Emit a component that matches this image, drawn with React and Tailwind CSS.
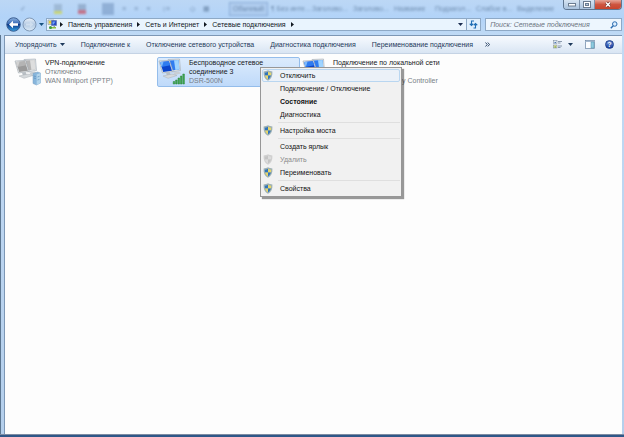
import { useState } from "react";

const crumbs = ["Панель управления", "Сеть и Интернет", "Сетевые подключения"];

const commands = [
  "Подключение к",
  "Отключение сетевого устройства",
  "Диагностика подключения",
  "Переименование подключения",
];

const ghostStyles = ["¶ Без инте...", "Заголово...", "Заголово...", "Название", "Подзагол...", "Слабое в...", "Выделение"];

const menu = [
  [
    { label: "Отключить", shield: true },
    { label: "Подключение / Отключение" },
    { label: "Состояние", bold: true },
    { label: "Диагностика" },
  ],
  [{ label: "Настройка моста", shield: true }],
  [
    { label: "Создать ярлык" },
    { label: "Удалить", shield: true, disabled: true },
    { label: "Переименовать", shield: true },
  ],
  [{ label: "Свойства", shield: true }],
];

function Caret({ className }) {
  return (
    <svg className={className} width="5" height="3" viewBox="0 0 5 3" aria-hidden="true">
      <path d="M0 0h5L2.5 3z" fill="currentColor" />
    </svg>
  );
}

function Arrow() {
  return (
    <svg width="3" height="5" viewBox="0 0 3 5" aria-hidden="true">
      <path d="M0 0v5L3 2.5z" fill="#111820" />
    </svg>
  );
}

function Shield({ gray }) {
  const blue = gray ? "#c4c4c4" : "#2f74bd";
  const yellow = gray ? "#dcdcdc" : "#e6d66a";
  return (
    <svg width="10" height="11" viewBox="0 0 18 20" aria-hidden="true">
      <path d="M9 .5C6.500 2 4 2.500 1 2.500c-.5 8.500 2 14 8 17 6-3 8.500-8.500 8-17C14 2.500 11.500 2 9 .5z" fill={gray ? "#d0d0d0" : "#9db0b4"} />
      <path d="M9 3C7 4.200 5 4.800 3.200 5c0 2 .2 3.500.6 5H9z" fill={blue} />
      <path d="M9 3c2 1.200 4 1.800 5.800 2 0 2-.2 3.500-.6 5H9z" fill={yellow} />
      <path d="M3.800 10H9v7c-2.500-1.500-4.500-4-5.200-7z" fill={yellow} />
      <path d="M14.200 10H9v7c2.500-1.500 4.500-4 5.200-7z" fill={blue} />
    </svg>
  );
}

function Computers({ on, badge }) {
  const dark = on ? "#0b45cc" : "#9a9a9a";
  const mid = on ? "#2f7cf0" : "#b4b4b4";
  const light = on ? "#9fd4ff" : "#dedede";
  return (
    <svg className="shrink-0" width="28" height="28" viewBox="0 0 28 28" aria-hidden="true">
      {/* rear monitor */}
      <path d="M10 1.500 21.500 1l1 11.500-9 1.500z" fill="#dfe3e7" stroke="#a3abb3" strokeWidth=".6" />
      <path d="M11 2.500 20.600 2l.8 9.500-8 1z" fill={mid} />
      <path d="M16 2.200 20.600 2l.8 9.500-4 .5z" fill={light} />
      <path d="M15 14.500l6-1 2 2-6 1.500z" fill="#c9ced3" />
      {/* front monitor */}
      <path d="M1 3l10.500-.6 3.600 11L4.500 15z" fill="#eceff1" stroke="#9aa2aa" strokeWidth=".6" />
      <path d="M2 3.900l8.900-.6 3.100 9.400-8.800 1.300z" fill={dark} />
      <path d="M2 3.900l8.900-.6 1.300 4L3.500 9z" fill={mid} />
      <path d="M2 3.900l3.500-.2L4 8.500l-.6.300z" fill={light} opacity=".7" />
      <path d="M8 14.600l3.600-.5 1.200 2.700-4 .6z" fill="#b8bec4" />
      <path d="M5 18l9-2 5 1.500-9 2.800z" fill="#d5d9dc" stroke="#aab0b6" strokeWidth=".5" />
      {badge === "signal" && (
        <g fill="#43ab52" stroke="#27833a" strokeWidth=".5">
          <path d="M15.200 23.500h1.600V26h-1.600zM17.600 22h1.600v4h-1.600zM20 20h1.600v6H20zM22.400 18h1.600v8h-1.600zM24.800 16h1.600v10h-1.600z" />
        </g>
      )}
      {badge === "server" && (
        <g>
          <path d="M19 15.500l4.500-1.500 3 1v10l-4 2-3.500-1.500z" fill="#88b6dc" stroke="#7a9fc0" strokeWidth=".5" />
          <path d="M22.700 16.500l3.800-1.500v10l-3.800 2z" fill="#b3d5ec" />
          <path d="M19.800 18l2 .5M19.800 20l2 .5M23.500 19l2-.7M23.500 22l2-.7" stroke="#4f83b2" strokeWidth=".6" />
        </g>
      )}
    </svg>
  );
}

function Connection({ title, status, device, on, badge, selected, deviceEnd }) {
  return (
    <li
      className={`flex h-[30px] w-[143px] rounded-xs border leading-[9px] ${
        selected ? "border-[#94bdeb] bg-linear-to-b from-[#dcebfc] to-[#bfdafa]" : "border-transparent"
      }`}
    >
      <Computers on={on} badge={badge} />
      <div className="ml-[3px] min-w-0 flex-1 text-[#777d85]">
        <div className={`text-[#16181b] ${selected ? "pr-6" : "whitespace-nowrap"}`}>{title}</div>
        {status !== undefined && <div className="h-[9px]">{status}</div>}
        <div className={`whitespace-nowrap ${deviceEnd ? "pl-[69px]" : ""}`}>{device}</div>
      </div>
    </li>
  );
}

function ContextMenu() {
  return (
    <div
      role="menu"
      className="absolute top-[13px] left-[255px] z-10 w-[142px] border border-[#979797] bg-[#f1f1f1] p-px text-[#111] shadow-[2px_2px_1px_#00000066]"
    >
      {menu.map((group, i) => (
        <div key={i} role="group">
          {i > 0 && <div className="my-px ml-4 h-px bg-[#dfdfdf]" />}
          {group.map((item) => (
            <button
              key={item.label}
              type="button"
              role="menuitem"
              disabled={item.disabled}
              className={`flex h-[13px] w-full items-center border text-left leading-[9px] hover:bg-[#e6eff9] ${
                item.label === "Отключить" ? "rounded-xs border-[#b9d6f0] bg-[#ebf1f8]" : "border-transparent"
              } ${item.bold ? "font-bold" : ""} ${item.disabled ? "text-[#8b8b8b]" : ""}`}
            >
              <span className="flex w-[17px] shrink-0">{item.shield && <Shield gray={item.disabled} />}</span>
              {item.label}
            </button>
          ))}
        </div>
      ))}
    </div>
  );
}

function GlassBackdrop() {
  return (
    <div aria-hidden="true" className="absolute inset-x-0 top-0 h-[17px] overflow-hidden text-[#3d5a7c] opacity-60 blur-[1px]">
      <div className="flex h-[17px] items-center pl-5 leading-[9px]">
        <div className="flex w-[209px] shrink-0 items-center gap-2">
          <span>✓</span>
          <span className="ml-5 h-[10px] w-2 border-b-3 border-[#d8d820] bg-[#8fa9c4]" />
          <span className="ml-2 h-[10px] w-2 border-b-4 border-[#cc3545] bg-[#8099ba]" />
          <span className="ml-2 h-3 w-3 bg-[#7798c2]" />
          <span>≡</span>
          <span>≡</span>
          <span>≡</span>
          <span className="ml-1">↕≡</span>
          <span className="ml-3">◇</span>
          <span>▦</span>
        </div>
        <span className="h-[14px] w-[39px] shrink-0 border border-[#6d92c2] bg-[#a9c6ea] pt-px pl-[3px] whitespace-nowrap">Обычный</span>
        <div className="flex gap-[6px] pl-[3px]">
          {ghostStyles.map((name, i) => (
            <span key={i} className="w-[35px] whitespace-nowrap">{name}</span>
          ))}
        </div>
      </div>
    </div>
  );
}

function CaptionButtons() {
  return (
    <div className="absolute top-0 right-[2px] flex h-[10px] overflow-hidden rounded-b-sm border border-t-0 border-[#5f7690]">
      <button type="button" aria-label="Свернуть" className="flex w-4 items-center justify-center border-r border-[#7d93ad] bg-linear-to-b from-[#d6e4f2] to-[#a9c2dd]">
        <svg width="8" height="4" viewBox="0 0 8 4"><rect x=".5" y=".5" width="7" height="2.500" fill="#fff" stroke="#6b7c90" /></svg>
      </button>
      <button type="button" aria-label="Развернуть" className="flex w-[15px] items-center justify-center border-r border-[#7d93ad] bg-linear-to-b from-[#d6e4f2] to-[#a9c2dd]">
        <svg width="8" height="7" viewBox="0 0 8 7">
          <rect x=".5" y=".5" width="7" height="6" fill="#fff" stroke="#6b7c90" />
          <rect x="2.500" y="2.500" width="3" height="2" fill="#b5c9df" stroke="#6b7c90" />
        </svg>
      </button>
      <button type="button" aria-label="Закрыть" className="flex w-[26px] items-center justify-center bg-linear-to-b from-[#e6a598] via-[#cd5540] to-[#c8442c]">
        <svg width="8" height="7" viewBox="0 0 8 7">
          <path d="M2 1.500l4 4M6 1.500l-4 4" stroke="#6d2a22" strokeWidth="2.600" />
          <path d="M2 1.500l4 4M6 1.500l-4 4" stroke="#fff" strokeWidth="1.600" />
        </svg>
      </button>
    </div>
  );
}

function AddressRow() {
  const [query, setQuery] = useState("");
  return (
    <div className="relative flex h-[15px] items-center pr-[2px] pl-[6px]">
      <button type="button" aria-label="Назад" className="shrink-0">
        <svg width="15" height="15" viewBox="0 0 30 30">
          <defs>
            <linearGradient id="back" x1="0" y1="0" x2="0" y2="1">
              <stop offset="0" stopColor="#8fb4e2" />
              <stop offset=".48" stopColor="#2f62b0" />
              <stop offset=".5" stopColor="#0c3787" />
              <stop offset="1" stopColor="#37a5e6" />
            </linearGradient>
          </defs>
          <circle cx="15" cy="15" r="13.500" fill="url(#back)" stroke="#3c5e90" strokeWidth="2" />
          <path d="M6 15l8-7.500v5h10v5H14v5z" fill="#fff" />
        </svg>
      </button>
      <button type="button" aria-label="Вперед" className="ml-px shrink-0">
        <svg width="15" height="15" viewBox="0 0 30 30">
          <defs>
            <linearGradient id="fwd" x1="0" y1="0" x2="0" y2="1">
              <stop offset="0" stopColor="#e9f1fa" />
              <stop offset=".5" stopColor="#b3c9e2" />
              <stop offset="1" stopColor="#dcebf8" />
            </linearGradient>
          </defs>
          <circle cx="15" cy="15" r="13" fill="url(#fwd)" stroke="#8098b5" strokeWidth="2" />
          <path d="M23 15l-7-6v4H8v4h8v4z" fill="#cfdeee" />
        </svg>
      </button>
      <Caret className="mx-[2px] shrink-0 text-[#17527f]" />
      <div className="flex h-[13px] min-w-0 flex-1 items-center border border-[#8ea9c6] bg-[#e9f4fe]">
        <svg className="shrink-0" width="11" height="11" viewBox="0 0 22 22" aria-hidden="true">
          <path d="M2 2h12v9H2z" fill="#d9e4c0" stroke="#7a8794" />
          <path d="M4 4h5v5H4z" fill="#e1c83b" />
          <path d="M9 3h10v10H9z" fill="#2447c5" stroke="#5a6a9a" />
          <path d="M11 5h6l-4 6h-2z" fill="#6ea2f5" />
          <path d="M13 13h3v3h-3z" fill="#8f9db0" />
          <path d="M5 16h13v3H5z" fill="#8cc23f" />
          <circle cx="7" cy="17" r="3" fill="#3f9a42" />
        </svg>
        <nav className="ml-[2px] flex flex-1 items-center gap-[5px] whitespace-nowrap">
          <Arrow />
          {crumbs.map((name) => (
            <span key={name} className="flex items-center gap-[5px]">
              <a href="#" className="text-[#10161d]">{name}</a>
              <Arrow />
            </span>
          ))}
        </nav>
        <button type="button" aria-label="Предыдущие расположения" className="px-[3px] text-[#1b2c50]">
          <Caret />
        </button>
      </div>
      <button type="button" aria-label="Обновить" className="-ml-px flex h-[13px] w-[15px] shrink-0 items-center justify-center border border-[#8ea9c6] bg-[#e0effd]">
        <svg width="9" height="9" viewBox="0 0 18 18" fill="none" stroke="#226fb5" strokeWidth="2.200">
          <path d="M10 2H5v8M1.500 7.500L5 11l3.500-3.500" />
          <path d="M9 16h4V8M9.500 10.500L13 7l3.500 3.500" />
        </svg>
      </button>
      <label className="ml-1 flex h-[13px] w-2/9 shrink-0 items-center border border-[#8ea9c6] bg-[#edf6fe] pr-[3px] pl-1">
        <input
          type="text"
          value={query}
          onChange={(e) => setQuery(e.target.value)}
          aria-label="Поиск"
          placeholder="Поиск: Сетевые подключения"
          className="min-w-0 flex-1 italic outline-none placeholder:text-[#6b7480]"
        />
        <svg width="8" height="8" viewBox="0 0 16 16" fill="none" stroke="#2b6cb0" aria-hidden="true">
          <circle cx="9.500" cy="6" r="4.500" strokeWidth="2" fill="#dff0ff" />
          <path d="M6.500 9.500L1.500 14.500" strokeWidth="3" />
        </svg>
      </label>
    </div>
  );
}

function CommandBar() {
  return (
    <div className="flex h-[18px] items-center border-b border-[#c5d3e4] bg-linear-to-b from-[#f7fafe] via-[#e8f0f9] to-[#d9e5f3] pr-2 pl-[10px] whitespace-nowrap text-[#1e395b]">
      <div className="flex flex-1 items-center gap-4">
        <button type="button" className="flex items-center gap-[3px]">
          Упорядочить <Caret />
        </button>
        {commands.map((name) => (
          <button key={name} type="button">{name}</button>
        ))}
        <button type="button" aria-label="Еще" className="-ml-1">
          <svg width="5" height="5" viewBox="0 0 10 10" fill="none" stroke="#1e395b" strokeWidth="1.800">
            <path d="M1 1l3.500 4L1 9M5.500 1L9 5 5.500 9" />
          </svg>
        </button>
      </div>
      <button type="button" aria-label="Изменить представление" className="flex items-center gap-[5px]">
        <svg width="10" height="9" viewBox="0 0 20 18">
          <rect x="1" y="1" width="7" height="6" fill="#dfe8ef" stroke="#77879a" />
          <path d="M3 4h3v2H3z" fill="#4c78b8" />
          <rect x="1" y="10" width="7" height="6" fill="#e5e29a" stroke="#77879a" />
          <path d="M3 13h3v2H3z" fill="#5c9a42" />
          <path d="M10 3h8M10 6h5M10 12h8M10 15h5" stroke="#61748c" strokeWidth="1.400" />
        </svg>
        <Caret />
      </button>
      <button type="button" aria-label="Область просмотра" className="ml-3">
        <svg width="10" height="9" viewBox="0 0 20 18">
          <rect x="1" y="1" width="18" height="16" fill="#fbfdff" stroke="#728aa8" strokeWidth="1.500" />
          <path d="M1 2h18v2H1z" fill="#a5bad1" />
          <path d="M12 4h6v12h-6z" fill="#8fcbe0" stroke="#5792ac" />
        </svg>
      </button>
      <button type="button" aria-label="Справка" className="ml-[10px] flex h-[9px] w-[9px] items-center justify-center rounded-full border border-[#1b3d8c] bg-linear-to-b from-[#6f92d8] to-[#1c3f9e] font-bold text-white">
        ?
      </button>
    </div>
  );
}

export default function App() {
  return (
    <div className="relative flex min-h-screen flex-col bg-linear-to-b from-[#c3dbf5] to-[#b4cfec] font-['Liberation_Sans',Arial,sans-serif] text-[7px] leading-[9px]">
      <header className="relative bg-linear-to-b from-[#bcd7f5] via-[#b2d3f8] to-[#bfdaf5] pt-[17px] pb-[3px]">
        <GlassBackdrop />
        <CaptionButtons />
        <AddressRow />
      </header>
      <div className="flex flex-1 flex-col border-l border-[#5c7690] pr-[2px] pl-[3px]">
        <div className="flex flex-1 flex-col border-t border-l border-[#7d97b5]">
          <CommandBar />
          <main className="relative flex-1 bg-[#fdfdfd]">
            <ul className="flex flex-wrap gap-px pt-[3px] pl-2">
              <Connection title="VPN-подключение" status="Отключено" device="WAN Miniport (PPTP)" badge="server" />
              <Connection title="Беспроводное сетевое соединение 3" device="DSR-500N" badge="signal" on selected />
              <Connection title="Подключение по локальной сети" status="" device="y Controller" on deviceEnd />
            </ul>
            <ContextMenu />
          </main>
        </div>
      </div>
      <footer className="h-[3px] border-t border-[#7e8ca3] bg-[#2f5788]" />
    </div>
  );
}
